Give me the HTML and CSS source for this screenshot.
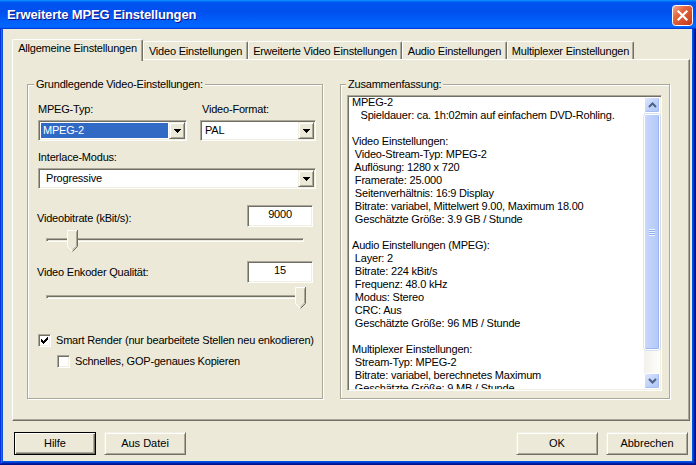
FILE: index.html
```html
<!DOCTYPE html>
<html lang="de">
<head>
<meta charset="utf-8">
<title>Erweiterte MPEG Einstellungen</title>
<link rel="stylesheet" href="styles.css">
</head>
<body>
<div class="window">
  <div class="titlebar">
    <span class="title">Erweiterte MPEG Einstellungen</span>
    <span class="close" aria-label="Schließen">
      <svg width="21" height="21" viewBox="0 0 21 21">
        <defs>
          <linearGradient id="closeGrad" x1="0" y1="0" x2="1" y2="1">
            <stop offset="0" stop-color="#F4B29C"/>
            <stop offset="0.35" stop-color="#E5673F"/>
            <stop offset="1" stop-color="#C0361A"/>
          </linearGradient>
        </defs>
        <rect x="0.5" y="0.5" width="20" height="20" rx="3" fill="url(#closeGrad)" stroke="#fff"/>
        <path d="M6.5 6.5L14.5 14.5M14.5 6.5L6.5 14.5" stroke="#fff" stroke-width="2.2" stroke-linecap="square"/>
      </svg>
    </span>
  </div>
  <div class="client">
    <div class="tabs">
      <div class="tab tab--active tab--w1">Allgemeine Einstellungen</div>
      <div class="tab tab--w2">Video Einstellungen</div>
      <div class="tab tab--w3">Erweiterte Video Einstellungen</div>
      <div class="tab tab--w2">Audio Einstellungen</div>
      <div class="tab tab--w4">Multiplexer Einstellungen</div>
    </div>
    <div class="panel">
      <fieldset class="group group--video">
        <legend>Grundlegende Video-Einstellungen:</legend>
        <div class="group-body">
          <div class="combo-row">
            <div class="field field--type">
              <div class="label">MPEG-Typ:</div>
              <div class="combo">
                <span class="combo-value combo-value--selected">MPEG-2</span>
                <span class="combo-btn"><svg width="7" height="4" viewBox="0 0 7 4"><path d="M0 0h7v1H0zM1 1h5v1H1zM2 2h3v1H2zM3 3h1v1H3z"/></svg></span>
              </div>
            </div>
            <div class="field field--format">
              <div class="label label--indent">Video-Format:</div>
              <div class="combo">
                <span class="combo-value">PAL</span>
                <span class="combo-btn"><svg width="7" height="4" viewBox="0 0 7 4"><path d="M0 0h7v1H0zM1 1h5v1H1zM2 2h3v1H2zM3 3h1v1H3z"/></svg></span>
              </div>
            </div>
          </div>
          <div class="label label--gap">Interlace-Modus:</div>
          <div class="combo">
            <span class="combo-value combo-value--wide">Progressive</span>
            <span class="combo-btn"><svg width="7" height="4" viewBox="0 0 7 4"><path d="M0 0h7v1H0zM1 1h5v1H1zM2 2h3v1H2zM3 3h1v1H3z"/></svg></span>
          </div>
          <div class="value-row value-row--bitrate">
            <span class="value-label value-label--low">Videobitrate (kBit/s):</span>
            <span class="edit">9000</span>
          </div>
          <div class="slider">
            <div class="track"></div>
            <svg class="thumb" style="left:29px" width="11" height="22" viewBox="0 0 11 22">
              <path d="M0 0H11V16.5L5.5 22L0 16.5Z" fill="#ECE9D8"/>
              <path d="M0.5 16.5V0.5H10" stroke="#fff" fill="none"/>
              <path d="M0.5 16.5L5.5 21.5" stroke="#fff" fill="none"/>
              <path d="M10.5 0V16.5L5.5 21.5" stroke="#716F64" fill="none"/>
              <path d="M9.5 1.5V16L5.5 20" stroke="#ACA899" fill="none"/>
            </svg>
          </div>
          <div class="value-row value-row--quality">
            <span class="value-label">Video Enkoder Qualität:</span>
            <span class="edit">15</span>
          </div>
          <div class="slider slider--quality">
            <div class="track"></div>
            <svg class="thumb" style="left:257px" width="11" height="22" viewBox="0 0 11 22">
              <path d="M0 0H11V16.5L5.5 22L0 16.5Z" fill="#ECE9D8"/>
              <path d="M0.5 16.5V0.5H10" stroke="#fff" fill="none"/>
              <path d="M0.5 16.5L5.5 21.5" stroke="#fff" fill="none"/>
              <path d="M10.5 0V16.5L5.5 21.5" stroke="#716F64" fill="none"/>
              <path d="M9.5 1.5V16L5.5 20" stroke="#ACA899" fill="none"/>
            </svg>
          </div>
          <div class="check check--first">
            <span class="box"><svg width="7" height="7" viewBox="0 0 7 7"><path d="M6 0h1v1H6zM5 1h2v1H5zM0 2h1v1H0zM4 2h3v1H4zM0 3h2v1H0zM3 3h3v1H3zM0 4h5v1H0zM1 5h3v1H1zM2 6h1v1H2z"/></svg></span>
            <span>Smart Render (nur bearbeitete Stellen neu enkodieren)</span>
          </div>
          <div class="check check--sub">
            <span class="box"></span>
            <span>Schnelles, GOP-genaues Kopieren</span>
          </div>
        </div>
      </fieldset>
      <fieldset class="group group--summary">
        <legend>Zusammenfassung:</legend>
        <div class="summary-body">
          <div class="memo">
            <div class="memo-text">MPEG-2
   Spieldauer: ca. 1h:02min auf einfachem DVD-Rohling.

Video Einstellungen:
 Video-Stream-Typ: MPEG-2
 Auflösung: 1280 x 720
 Framerate: 25.000
 Seitenverhältnis: 16:9 Display
 Bitrate: variabel, Mittelwert 9.00, Maximum 18.00
 Geschätzte Größe: 3.9 GB / Stunde

Audio Einstellungen (MPEG):
 Layer: 2
 Bitrate: 224 kBit/s
 Frequenz: 48.0 kHz
 Modus: Stereo
 CRC: Aus
 Geschätzte Größe: 96 MB / Stunde

Multiplexer Einstellungen:
 Stream-Typ: MPEG-2
 Bitrate: variabel, berechnetes Maximum
 Geschätzte Größe: 9 MB / Stunde</div>
            <div class="scrollbar">
              <span class="sb-btn"><svg width="9" height="6" viewBox="0 0 9 6"><path d="M1 5L4.5 1.5L8 5" stroke="#4D6185" stroke-width="2" fill="none"/></svg></span>
              <span class="sb-thumb"><span class="grip"></span></span>
              <span class="sb-track"></span>
              <span class="sb-btn"><svg width="9" height="6" viewBox="0 0 9 6"><path d="M1 1L4.5 4.5L8 1" stroke="#4D6185" stroke-width="2" fill="none"/></svg></span>
            </div>
          </div>
        </div>
      </fieldset>
    </div>
    <div class="buttons">
      <button class="btn btn--default">Hilfe</button>
      <button class="btn">Aus Datei</button>
      <button class="btn btn--push">OK</button>
      <button class="btn">Abbrechen</button>
    </div>
  </div>
</div>
</body>
</html>
```

FILE: styles.css
```css
* { box-sizing: border-box; }
html, body { margin: 0; padding: 0; }
body {
  width: 696px;
  height: 465px;
  overflow: hidden;
  font-family: "Liberation Sans", Arial, sans-serif;
  font-size: 11px;
  line-height: 13px;
  letter-spacing: -0.2px;
  color: #000;
  background: #fff;
}

.window {
  width: 696px;
  height: 465px;
  display: flex;
  flex-direction: column;
  background: #0054E3;
  box-shadow: inset -1px -1px #00138c, inset 1px 1px #0831d9, inset -2px -2px #001ea0,
    inset 2px 2px #166aee, inset -3px -3px #003bda, inset 3px 3px #0855dd;
}

.titlebar {
  flex: none;
  height: 29px;
  display: flex;
  align-items: center;
  justify-content: space-between;
  padding: 0 3px 0 7px;
  background: linear-gradient(180deg, #0997ff, #0053ee 8%, #0050ee 40%, #06f 88%, #06f 93%, #005bff 95%, #003dd7 96%, #003dd7);
}
.title {
  color: #fff;
  font-weight: bold;
  font-size: 13px;
  letter-spacing: -0.15px;
  text-shadow: 1px 1px #0f1089;
  white-space: nowrap;
}
.close { display: block; width: 21px; height: 21px; margin-top: 2px; }
.close svg { display: block; }

.client {
  flex: 1;
  margin: 0 4px 4px 3px;
  background: #ECE9D8;
  padding: 10px 2px 0 9px;
  display: flex;
  flex-direction: column;
}

/* Tabs */
.tabs { flex: none; height: 20px; display: flex; align-items: flex-end; }
.tab {
  flex: none;
  height: 18px;
  padding-top: 3px;
  text-align: center;
  white-space: nowrap;
  background: #ECE9D8;
  border-top: 1px solid #fff;
  border-left: 1px solid #fff;
  border-right: 1px solid #716F64;
  box-shadow: inset -1px 0 #ACA899;
  border-radius: 2px 2px 0 0;
}
.tab--active {
  height: 22px;
  margin-bottom: -2px;
  padding-top: 2px;
  position: relative;
  z-index: 1;
}
.tab--w1 { width: 131px; }
.tab--w2 { width: 105px; }
.tab--w3 { width: 154px; }
.tab--w4 { width: 127px; }

/* Panel */
.panel {
  flex: none;
  height: 362px;
  display: flex;
  gap: 17px;
  padding: 18px 19px 21px 14px;
  border: 1px solid;
  border-color: #fff #716F64 #716F64 #fff;
  box-shadow: inset -1px -1px #ACA899;
}

.group {
  margin: 0;
  padding: 0;
  min-width: 0;
  border: 1px solid #ACA899;
  box-shadow: 1px 1px #fff, inset 1px 1px #fff;
}
.group legend {
  margin-left: 6px;
  padding: 0 2px;
  line-height: 13px;
  background: #ECE9D8;
}
.group--video { flex: none; width: 296px; }
.group--summary { flex: 1; }
.group--summary legend { margin-left: 5px; }

.group-body { padding: 12px 6px 0 10px; }

.combo-row { display: flex; gap: 13px; }
.field--type { flex: none; width: 149px; }
.field--format { flex: 1; }
.label { height: 13px; margin-bottom: 4px; white-space: nowrap; }
.label--indent { padding-left: 2px; }
.label--gap { margin-top: 10px; }

.combo, .edit, .box, .memo {
  background: #fff;
  border: 1px solid;
  border-color: #ACA899 #fff #fff #ACA899;
  box-shadow: inset 1px 1px #716F64, inset -1px -1px #F1EFE2;
}
.combo {
  height: 21px;
  display: flex;
  padding: 1px;
}
.combo-value {
  flex: 1;
  display: flex;
  align-items: center;
  margin: 1px;
  padding-left: 2px;
  white-space: nowrap;
}
.combo-value--selected { background: #316AC5; color: #fff; }
.combo-value--wide { padding-left: 5px; }
.combo-btn {
  flex: none;
  width: 16px;
  display: flex;
  align-items: center;
  justify-content: center;
  background: #ECE9D8;
  border: 1px solid;
  border-color: #F1EFE2 #716F64 #716F64 #F1EFE2;
  box-shadow: inset 1px 1px #fff, inset -1px -1px #ACA899;
}
.combo-btn svg { display: block; }

.value-row {
  display: flex;
  align-items: center;
  justify-content: space-between;
  margin-right: 3px;
}
.value-row--bitrate { margin-top: 16px; }
.value-row--quality { margin-top: 9px; }
.value-label { margin-left: -1px; white-space: nowrap; }
.value-label--low { padding-top: 5px; }
.edit {
  flex: none;
  width: 66px;
  height: 22px;
  padding-top: 2px;
  text-align: center;
}

.slider { position: relative; display: flow-root; height: 22px; margin-top: 3px; }
.slider--quality { margin-top: 4px; }
.track {
  height: 4px;
  margin: 8px 12px 0 8px;
  background: #ECE9D8;
  border: 1px solid;
  border-color: #ACA899 #fff #fff #ACA899;
  box-shadow: inset 1px 1px #716F64;
}
.thumb { position: absolute; top: 0; display: block; }

.check { display: flex; align-items: center; height: 13px; white-space: nowrap; }
.check--first { margin-top: 25px; }
.check--sub { margin-top: 8px; padding-left: 19px; }
.box {
  flex: none;
  width: 13px;
  height: 13px;
  margin-right: 5px;
  display: flex;
  align-items: center;
  justify-content: center;
}
.box svg { display: block; }

.summary-body { padding: 4px 7px 0 6px; }
.memo {
  height: 296px;
  display: flex;
  padding: 1px;
}
.memo-text {
  flex: 1;
  min-width: 0;
  overflow: hidden;
  white-space: pre;
  padding-left: 3px;
  margin-top: -1px;
}
.scrollbar {
  flex: none;
  width: 16px;
  display: flex;
  flex-direction: column;
  background: linear-gradient(90deg, #F3F1EC, #FEFEFB);
}
.sb-btn {
  flex: none;
  height: 16px;
  display: flex;
  align-items: center;
  justify-content: center;
  border: 1px solid #fff;
  border-radius: 2px;
  background: linear-gradient(135deg, #DCE6FD, #BCCFF8 60%, #AFC6F6);
  box-shadow: inset -1px -1px #A5BDF3;
}
.sb-btn svg { display: block; }
.sb-thumb {
  flex: none;
  height: 236px;
  margin-top: 1px;
  display: flex;
  align-items: center;
  justify-content: center;
  border: 1px solid #fff;
  border-radius: 2px;
  background: linear-gradient(90deg, #C9D8FC, #BDD0FA 50%, #B2C8F7);
  box-shadow: inset -1px -1px #9DB5EE, 0 0 0 0.5px #B4C8F4;
}
.grip {
  display: block;
  width: 6px;
  height: 7px;
  background: repeating-linear-gradient(180deg, #EEF4FE 0 1px, #8EAEF2 1px 2px);
}
.sb-track { flex: 1; }

/* Buttons */
.buttons {
  flex: none;
  display: flex;
  gap: 8px;
  margin: 11px 2px 0;
}
.btn {
  width: 82px;
  height: 23px;
  padding: 0;
  font: inherit;
  color: #000;
  background: #ECE9D8;
  border: 1px solid;
  border-color: #F1EFE2 #716F64 #716F64 #F1EFE2;
  box-shadow: inset 1px 1px #fff, inset -1px -1px #ACA899;
}
.btn--default {
  border-color: #000;
  box-shadow: inset 1px 1px #fff, inset -1px -1px #716F64, inset -2px -2px #ACA899;
}
.btn--push { margin-left: auto; }
```
